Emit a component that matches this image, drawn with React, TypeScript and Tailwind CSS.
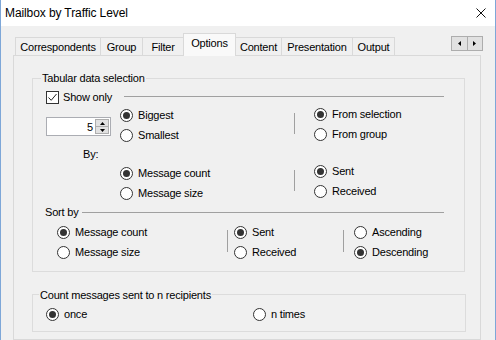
import React from "react";

function Radio({ label, checked = false, className = "" }: { label: string; checked?: boolean; className?: string }) {
  return (
    <div className={"flex items-center h-[20px] " + className}>
      <span className="w-[13px] h-[13px] rounded-full border border-[#333333] bg-white flex items-center justify-center shrink-0">
        {checked && <span className="w-[7px] h-[7px] rounded-full bg-[#333333]" />}
      </span>
      <span className="ml-[5px] whitespace-nowrap">{label}</span>
    </div>
  );
}

function VSep({ className = "" }: { className?: string }) {
  return <div className={"w-px bg-[#a0a0a0] shrink-0 " + className} />;
}

const tabs: { label: string; w: string; selected?: boolean }[] = [
  { label: "Correspondents", w: "w-[86px]" },
  { label: "Group", w: "w-[43px]" },
  { label: "Filter", w: "w-[42px]" },
  { label: "Options", w: "w-[53px]", selected: true },
  { label: "Content", w: "w-[47px]" },
  { label: "Presentation", w: "w-[72px]" },
  { label: "Output", w: "w-[43px]" },
];

export default function App() {
  return (
    <div className="w-[496px] h-[340px] bg-[#f0f0f0] border-x border-[#7ea7d8] overflow-hidden flex flex-col text-[11px] leading-[14px] text-black tracking-[-0.2px] font-['Liberation_Sans',Arial,sans-serif]">
      {/* Title bar */}
      <div className="h-[26px] bg-white flex items-center shrink-0">
        <span className="ml-[4px] text-[12px] tracking-[-0.1px]">Mailbox by Traffic Level</span>
        <svg className="ml-auto mr-[9px]" width="10" height="10" viewBox="0 0 10 10">
          <path d="M0.5 0.5 L9.5 9.5 M9.5 0.5 L0.5 9.5" stroke="#111" strokeWidth="1" fill="none" />
        </svg>
      </div>

      {/* Tab strip */}
      <div className="h-[29px] flex items-end shrink-0 relative z-10">
        <div className="flex items-end ml-[14px]">
          {tabs.map((t, i) =>
            t.selected ? (
              <div
                key={t.label}
                className={
                  "relative z-10 -ml-px -mb-px h-[23px] pb-[4px] flex items-center justify-center border-x border-t border-[#d9d9d9] bg-[#f9f9f9] " +
                  t.w
                }
              >
                {t.label}
              </div>
            ) : (
              <div
                key={t.label}
                className={
                  (i > 0 ? "-ml-px " : "") +
                  "h-[18px] flex items-center justify-center border-x border-t border-[#d9d9d9] bg-[#f0f0f0] " +
                  t.w
                }
              >
                {t.label}
              </div>
            )
          )}
        </div>
        <div className="self-start mt-[10px] ml-auto mr-[12px] flex w-[32px] h-[15px] border border-[#adadad] bg-[#e1e1e1]">
          <div className="flex-1 flex items-center justify-center border-r border-[#adadad]">
            <svg width="3" height="5" viewBox="0 0 3 5">
              <path d="M3 0 L0 2.5 L3 5 Z" fill="#000" />
            </svg>
          </div>
          <div className="flex-1 flex items-center justify-center">
            <svg width="3" height="5" viewBox="0 0 3 5">
              <path d="M0 0 L3 2.5 L0 5 Z" fill="#000" />
            </svg>
          </div>
        </div>
      </div>

      {/* Tab page */}
      <div className="flex-1 ml-[12px] w-[468px] border border-[#d9d9d9] bg-[#f0f0f0] flex flex-col">
        {/* Group 1 */}
        <div className="relative mt-[22px] ml-[18px] w-[433px] h-[194px] border border-[#dcdcdc] flex flex-col pt-[12px]">
          <span className="absolute left-[8px] top-[-8px] px-[1px] bg-[#f0f0f0] whitespace-nowrap">Tabular data selection</span>

          {/* Show only */}
          <div className="h-[13px] flex pl-[13px]">
            <span className="w-[13px] h-[13px] border border-[#333333] bg-white flex items-center justify-center shrink-0">
              <svg width="11" height="11" viewBox="0 0 11 11">
                <path d="M1.5 5.5 L4.2 8.3 L9.5 2" stroke="#222" strokeWidth="1" fill="none" />
              </svg>
            </span>
            <span className="ml-[4px] whitespace-nowrap leading-[13px]">Show only</span>
            <div className="flex-1 ml-[12px] mr-[20px] mt-[5px] h-px bg-[#a0a0a0]" />
          </div>

          {/* Biggest / Smallest */}
          <div className="mt-[1px] h-[40px] flex">
            <div className="w-[87px] pl-[13px] pt-[12px] shrink-0">
              <div className="w-[65px] h-[19px] border border-[#abadb3] bg-white flex">
                <div className="flex-1 flex items-center justify-end pr-[2px]">5</div>
                <div className="w-[14px] mr-[1px] my-[1px] flex flex-col border border-[#adadad] bg-[#e1e1e1]">
                  <div className="flex-1 flex items-center justify-center border-b border-[#adadad]">
                    <svg width="5" height="3" viewBox="0 0 5 3">
                      <path d="M0 3 L2.5 0 L5 3 Z" fill="#000" />
                    </svg>
                  </div>
                  <div className="flex-1 flex items-center justify-center">
                    <svg width="5" height="3" viewBox="0 0 5 3">
                      <path d="M0 0 L2.5 3 L5 0 Z" fill="#000" />
                    </svg>
                  </div>
                </div>
              </div>
            </div>
            <div className="w-[174px] shrink-0 flex flex-col">
              <Radio label="Biggest" checked />
              <Radio label="Smallest" />
            </div>
            <VSep className="mt-[8px] h-[21px]" />
            <div className="ml-[19px] -mt-[1px] flex flex-col">
              <Radio label="From selection" checked />
              <Radio label="From group" />
            </div>
          </div>

          {/* By: */}
          <div className="h-[18px] flex items-center pl-[50px]">By:</div>

          {/* Message count / size */}
          <div className="h-[40px] flex pl-[87px]">
            <div className="w-[174px] shrink-0 flex flex-col">
              <Radio label="Message count" checked />
              <Radio label="Message size" />
            </div>
            <VSep className="mt-[7px] h-[21px]" />
            <div className="ml-[19px] -mt-[2px] flex flex-col">
              <Radio label="Sent" checked />
              <Radio label="Received" />
            </div>
          </div>

          {/* Sort by */}
          <div className="h-[18px] flex items-center pl-[12px]">
            <span className="whitespace-nowrap">Sort by</span>
            <div className="flex-1 ml-[4px] mr-[20px] h-px bg-[#a0a0a0]" />
          </div>

          <div className="mt-[1px] flex pl-[24px]">
            <div className="w-[170px] shrink-0 flex flex-col">
              <Radio label="Message count" checked />
              <Radio label="Message size" />
            </div>
            <VSep className="mt-[8px] h-[22px]" />
            <div className="ml-[6px] w-[109px] shrink-0 flex flex-col">
              <Radio label="Sent" checked />
              <Radio label="Received" />
            </div>
            <VSep className="mt-[8px] h-[22px]" />
            <div className="ml-[10px] flex flex-col">
              <Radio label="Ascending" />
              <Radio label="Descending" checked />
            </div>
          </div>
        </div>

        {/* Group 2 */}
        <div className="relative mt-[22px] ml-[18px] w-[434px] h-[38px] border border-[#dcdcdc] pt-[9px]">
          <span className="absolute left-[6px] top-[-7px] px-[1px] bg-[#f0f0f0] whitespace-nowrap">Count messages sent to n recipients</span>
          <div className="flex pl-[13px]">
            <div className="w-[207px] shrink-0">
              <Radio label="once" checked />
            </div>
            <Radio label="n times" />
          </div>
        </div>
      </div>
    </div>
  );
}
